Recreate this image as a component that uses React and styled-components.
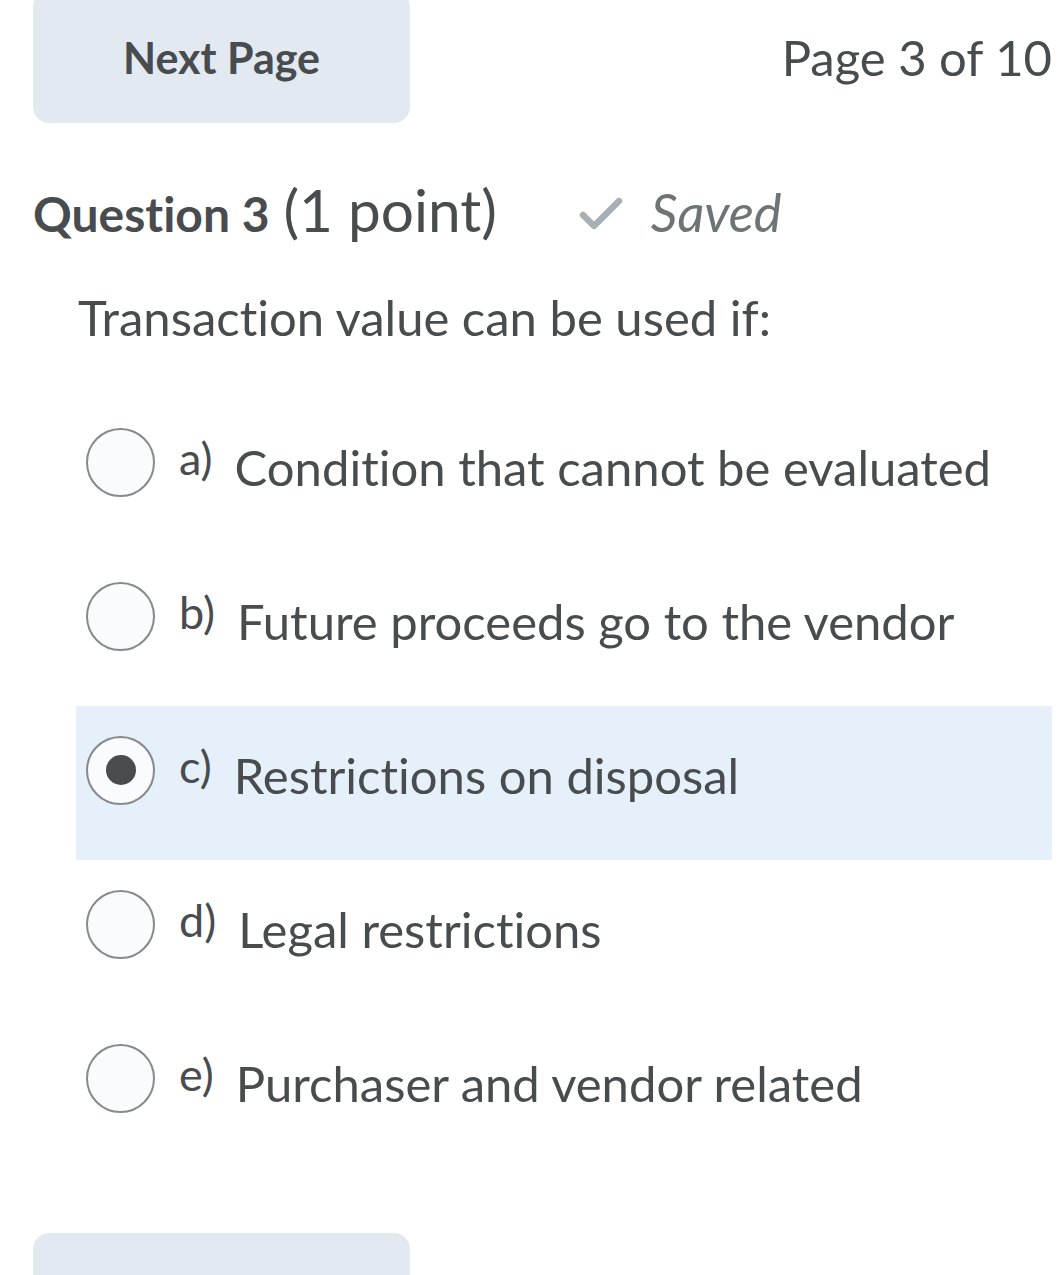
import React from "react";
import styled, { createGlobalStyle } from "styled-components";

const Global = createGlobalStyle`
  html, body { margin: 0; padding: 0; background: #ffffff; }
  body {
    font-family: Lato, "Open Sans", sans-serif;
    color: #494c4e;
    overflow: hidden;
    font-variant-ligatures: none;
  }
`;

const Page = styled.div`
  padding: 0 10px 0 33px;
`;

const TopBar = styled.div`
  display: flex;
  align-items: center;
  justify-content: space-between;
  margin-top: ${(p) => p.$top}px;
`;

const NavButton = styled.button`
  width: 377px;
  height: 132px;
  border: none;
  border-radius: 16px;
  background: #e3e9f1;
  color: #494c4e;
  font-family: Lato, sans-serif;
  font-variant-ligatures: none;
  font-weight: 700;
  font-size: 43px;
  padding: 0;
`;

const PageInfo = styled.div`
  font-size: 49px;
  font-weight: 400;
  line-height: 1;
  margin-right: 0;
`;

const QuestionHeader = styled.div`
  display: flex;
  align-items: baseline;
  margin-top: 57px;
  line-height: 1;
`;

const QTitle = styled.h2`
  margin: 0;
  font-size: 48px;
  font-weight: 700;
  line-height: 1;
`;

const QPoints = styled.span`
  font-size: 58.5px;
  font-weight: 400;
  margin-left: 14px;
`;

const Saved = styled.span`
  display: flex;
  align-items: baseline;
  margin-left: 82px;
  font-style: italic;
  font-size: 52.5px;
  color: #6e7376;
  gap: 28px;
`;

const Check = styled.svg`
  width: 44px;
  height: 36px;
  align-self: center;
  position: relative;
  top: 2px;
`;

const Prompt = styled.p`
  margin: 54px 0 0 45px;
  font-size: 49px;
  line-height: 1;
`;

const Options = styled.div`
  margin: 56px 0 0 43px;
  display: flex;
  flex-direction: column;
`;

const OptionRow = styled.label`
  display: flex;
  align-items: flex-start;
  height: 154px;
  box-sizing: border-box;
  padding: 30px 0 0 10px;
  background: ${(p) => (p.$selected ? "#e6f0fa" : "transparent")};
`;

const Radio = styled.span`
  flex: none;
  width: 69px;
  height: 69px;
  box-sizing: border-box;
  border-radius: 50%;
  border: 2.5px solid #87898c;
  background: #f9fbfe;
  display: flex;
  align-items: center;
  justify-content: center;
`;

const Dot = styled.span`
  width: 30px;
  height: 30px;
  border-radius: 50%;
  background: #494c4e;
`;

const Letter = styled.span`
  font-size: 45px;
  line-height: 1;
  margin: 8px 0 0 24px;
`;

const OptionText = styled.span`
  font-size: 49px;
  line-height: 1;
  margin: 15px 0 0 22px;
`;

const BottomBar = styled(TopBar)``;

const options = [
  ["a)", "Condition that cannot be evaluated"],
  ["b)", "Future proceeds go to the vendor"],
  ["c)", "Restrictions on disposal"],
  ["d)", "Legal restrictions"],
  ["e)", "Purchaser and vendor related"],
];

export default function App() {
  return (
    <Page>
      <Global />
      <TopBar $top={-9}>
        <NavButton>Next Page</NavButton>
        <PageInfo>Page 3 of 10</PageInfo>
      </TopBar>
      <QuestionHeader>
        <QTitle>Question 3</QTitle>
        <QPoints>(1 point)</QPoints>
        <Saved>
          <Check viewBox="0 0 44 36">
            <path
              d="M4 19 L15 30 L40 5"
              fill="none"
              stroke="#a9b0b5"
              strokeWidth="6.5"
              strokeLinecap="round"
              strokeLinejoin="round"
            />
          </Check>
          Saved
        </Saved>
      </QuestionHeader>
      <Prompt>Transaction value can be used if:</Prompt>
      <Options>
        {options.map(([l, t], i) => (
          <OptionRow key={l} $selected={i === 2}>
            <Radio>{i === 2 && <Dot />}</Radio>
            <Letter>{l}</Letter>
            <OptionText>{t}</OptionText>
          </OptionRow>
        ))}
      </Options>
      <BottomBar $top={65}>
        <NavButton>Next Page</NavButton>
        <PageInfo>Page 3 of 10</PageInfo>
      </BottomBar>
    </Page>
  );
}
